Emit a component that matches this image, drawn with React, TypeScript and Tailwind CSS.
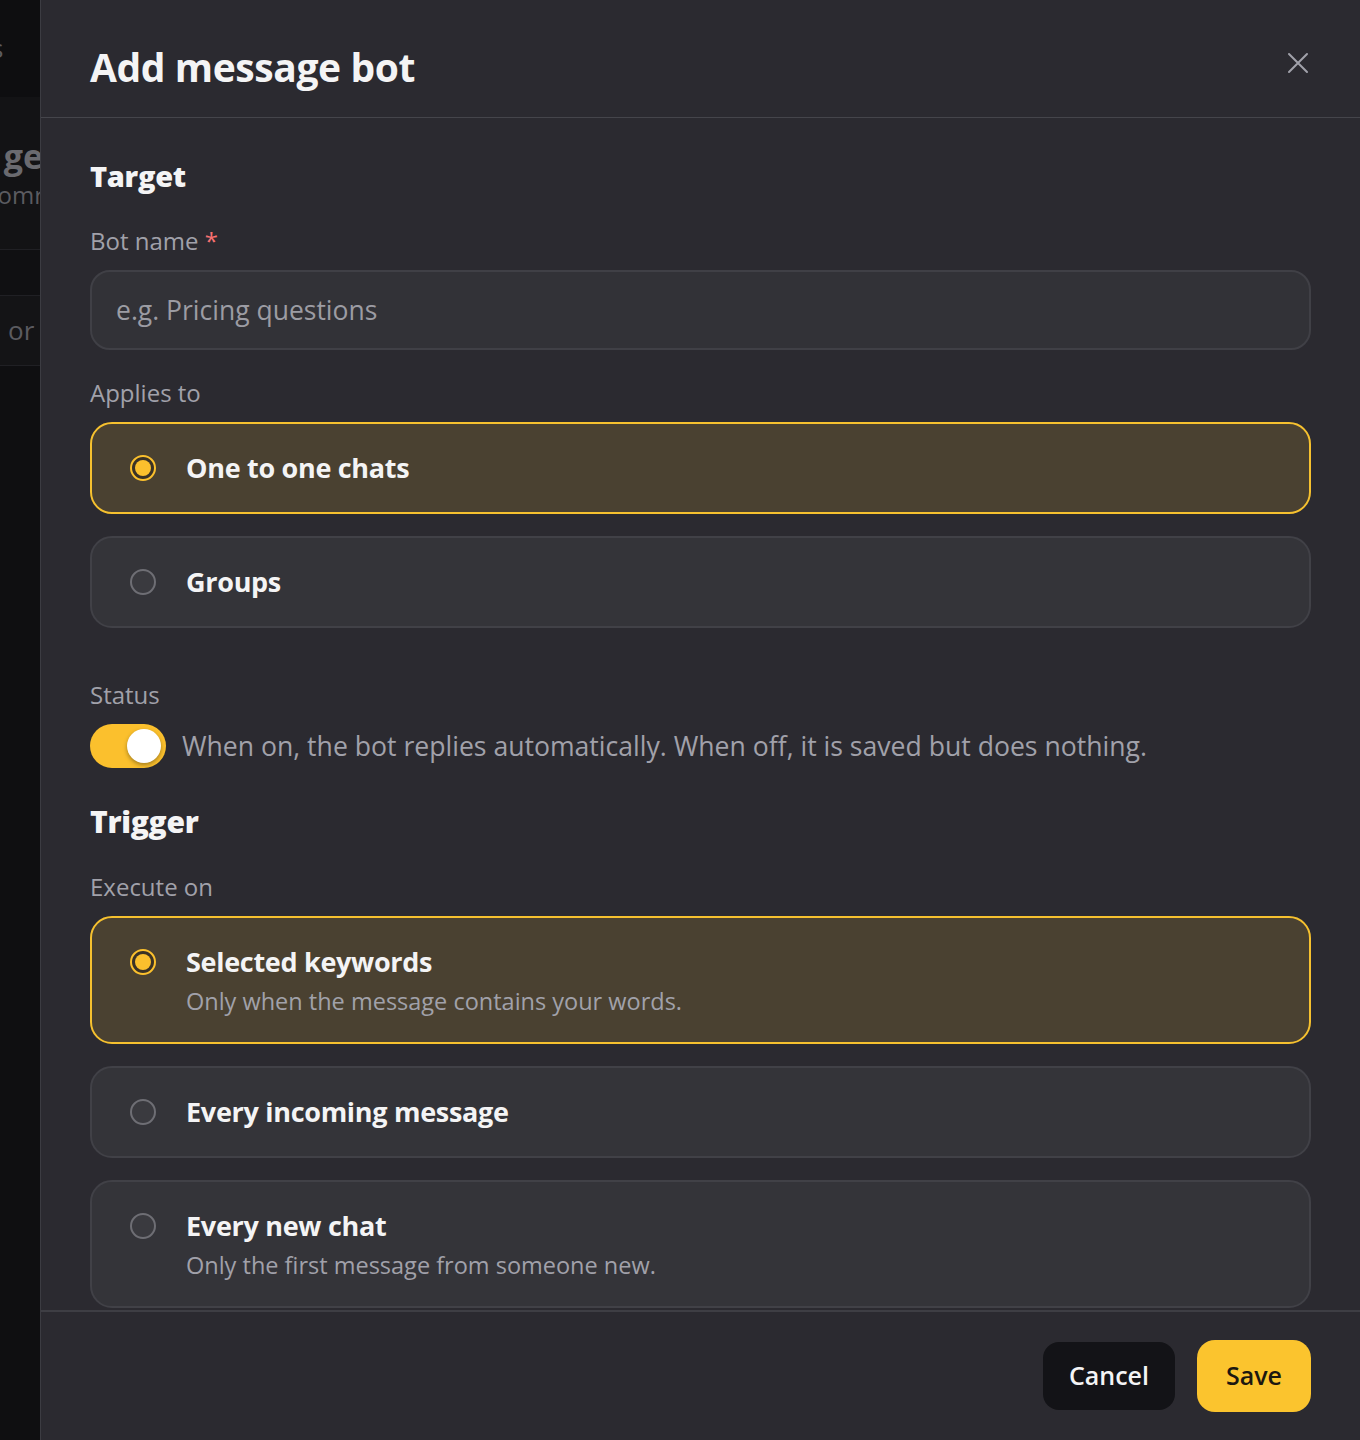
import React, { useState } from 'react';

type Option = {
  id: string;
  title: string;
  description?: string;
};

const APPLIES_TO: Option[] = [
  { id: 'direct', title: 'One to one chats' },
  { id: 'groups', title: 'Groups' },
];

const EXECUTE_ON: Option[] = [
  { id: 'keywords', title: 'Selected keywords', description: 'Only when the message contains your words.' },
  { id: 'every', title: 'Every incoming message' },
  { id: 'new', title: 'Every new chat', description: 'Only the first message from someone new.' },
];

const font = "font-['Open_Sans','Noto_Sans',sans-serif]";

const Radio: React.FC<{ checked: boolean }> = ({ checked }) =>
  checked ? (
    <span className="flex h-[26px] w-[26px] shrink-0 items-center justify-center rounded-full border-2 border-[#fbc02d] bg-[#3a3226]">
      <span className="block h-[16px] w-[16px] rounded-full bg-[#fbc02d]" />
    </span>
  ) : (
    <span className="block h-[26px] w-[26px] shrink-0 rounded-full border-2 border-[#6e6e74] bg-[#3a3a3f]" />
  );

const OptionCard: React.FC<{ option: Option; checked: boolean; onSelect: () => void }> = ({ option, checked, onSelect }) => (
  <button
    onClick={onSelect}
    className={`flex w-full gap-[30px] rounded-[22px] border-2 pl-[38px] pr-6 text-left ${
      option.description ? 'items-start pt-[28px] pb-[25px]' : 'items-center py-[28px]'
    } ${checked ? 'border-[#f6c12f] bg-[#4a4131]' : 'border-[#414147] bg-[#343439]'}`}
  >
    <span className={`flex shrink-0 ${option.description ? 'mt-[3px]' : ''}`}>
      <Radio checked={checked} />
    </span>
    <span className="flex flex-col">
      <span className="text-[27px] font-bold leading-[32px] tracking-[-0.3px] text-[#f4f4f5]">{option.title}</span>
      {option.description && (
        <span className="mt-[7px] text-[23.5px] leading-[32px] text-[#a1a1aa]">{option.description}</span>
      )}
    </span>
  </button>
);

export default function App() {
  const [applies, setApplies] = useState('direct');
  const [execute, setExecute] = useState('keywords');
  const [enabled, setEnabled] = useState(true);

  return (
    <div className={`flex h-[1440px] w-[1360px] overflow-hidden bg-[#111113] ${font}`}>
      {/* Page behind the drawer, dimmed */}
      <div className="flex w-[40px] shrink-0 flex-col overflow-hidden text-[#5b5b60]">
        <div className="flex h-[97px] items-center bg-[#0e0e10]">
          <span className="-ml-[9px] text-[26px]">s</span>
        </div>
        <div className="flex h-[153px] flex-col justify-center border-b border-[#202024] bg-[#131315]">
          <div className="flex justify-end">
            <span className="-mr-[3px] text-[34px] font-bold leading-[44px] text-[#6a6a6f]">ge</span>
          </div>
          <div className="flex justify-end">
            <span className="-mr-[4px] text-[24px] leading-[34px]">omr</span>
          </div>
        </div>
        <div className="h-[46px] border-b border-[#202024] bg-[#101012]" />
        <div className="flex h-[70px] items-center border-b border-[#202024] bg-[#141416] pl-[8px]">
          <span className="text-[26px]">or</span>
        </div>
        <div className="flex-1 bg-[#0f0f11]" />
      </div>

      {/* Drawer */}
      <div className="flex flex-1 flex-col border-l border-[#3c3c42] bg-[#2b2a30]">
        <header className="flex h-[118px] shrink-0 items-center justify-between border-b border-[#45454b] pl-[49px] pr-[50px]">
          <h1 className="mt-[18px] text-[39px] font-bold tracking-[-0.4px] text-[#f4f4f5]">Add message bot</h1>
          <button className="mt-[8px] text-[#a1a1aa]">
            <svg width="24" height="24" viewBox="0 0 24 24" fill="none" stroke="currentColor" strokeWidth="2" strokeLinecap="round">
              <path d="M3 3L21 21M21 3L3 21" />
            </svg>
          </button>
        </header>

        <main className="flex-1 overflow-hidden px-[49px] pt-[40px]">
          <h2 className="text-[29px] font-extrabold leading-[36px] tracking-[-0.3px] text-[#f4f4f5]">Target</h2>

          <label className="mt-[31px] block text-[24px] font-medium leading-[32px] text-[#a1a1aa]">
            Bot name <span className="text-[#f87171]">*</span>
          </label>
          <input
            placeholder="e.g. Pricing questions"
            className="mt-[13px] h-[80px] w-full rounded-[20px] border-2 border-[#404046] bg-[#323237] px-[24px] text-[26.5px] text-[#f4f4f5] outline-none placeholder:text-[#9c9ca3]"
          />

          <p className="mt-[27px] text-[24px] font-medium leading-[32px] text-[#a1a1aa]">Applies to</p>
          <div className="mt-[13px] flex flex-col gap-[22px]">
            {APPLIES_TO.map((o) => (
              <OptionCard key={o.id} option={o} checked={applies === o.id} onSelect={() => setApplies(o.id)} />
            ))}
          </div>

          <p className="mt-[51px] text-[24px] font-medium leading-[32px] text-[#a1a1aa]">Status</p>
          <div className="mt-[13px] flex items-center gap-[16px]">
            <button
              onClick={() => setEnabled(!enabled)}
              className={`flex h-[44px] w-[76px] shrink-0 items-center rounded-full px-[5px] ${
                enabled ? 'justify-end bg-[#fbc02d]' : 'justify-start bg-[#52525b]'
              }`}
            >
              <span className="block h-[34px] w-[34px] rounded-full bg-white shadow-[0_2px_4px_rgba(0,0,0,0.35)]" />
            </button>
            <span className="text-[26.6px] leading-[36px] text-[#a1a1aa]">
              When on, the bot replies automatically. When off, it is saved but does nothing.
            </span>
          </div>

          <h2 className="mt-[36px] text-[30px] font-extrabold leading-[36px] tracking-[-0.3px] text-[#f4f4f5]">Trigger</h2>

          <p className="mt-[31px] text-[24px] font-medium leading-[32px] text-[#a1a1aa]">Execute on</p>
          <div className="mt-[13px] flex flex-col gap-[22px]">
            {EXECUTE_ON.map((o) => (
              <OptionCard key={o.id} option={o} checked={execute === o.id} onSelect={() => setExecute(o.id)} />
            ))}
          </div>
        </main>

        <footer className="flex h-[130px] shrink-0 items-center justify-end gap-[22px] border-t-2 border-[#3e3e44] pr-[49px]">
          <button className="h-[68px] rounded-[16px] bg-[#131317] px-[26px] text-[25px] font-semibold text-[#f4f4f5]">
            Cancel
          </button>
          <button className="h-[72px] rounded-[18px] bg-[#fbc42e] px-[29px] text-[25px] font-semibold text-[#1c1710]">
            Save
          </button>
        </footer>
      </div>
    </div>
  );
}
